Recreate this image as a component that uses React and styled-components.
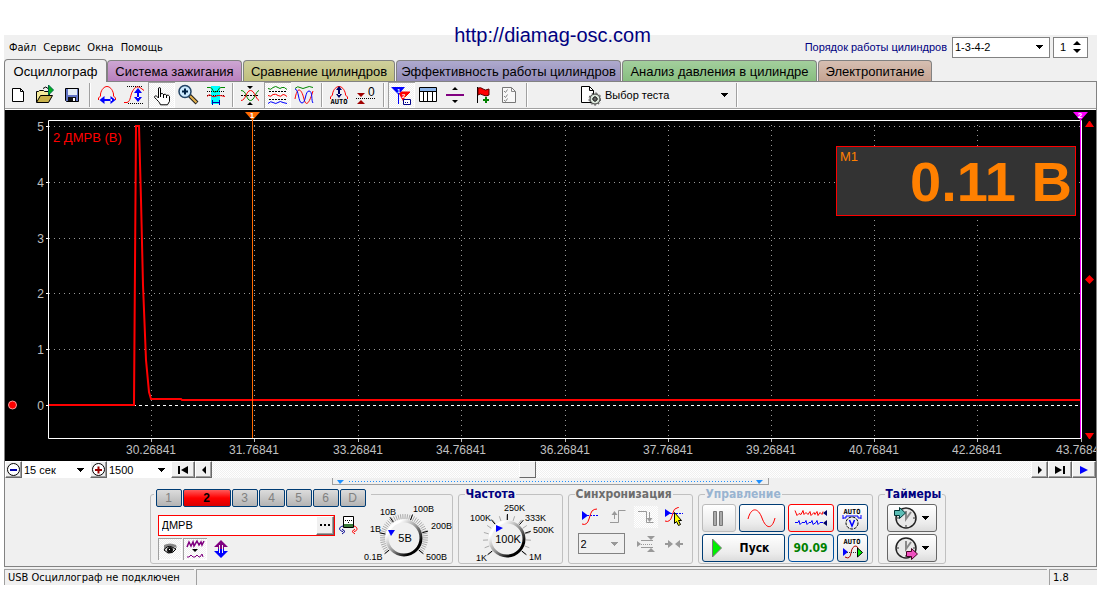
import React, { useState } from 'react'
import styled, { createGlobalStyle, css } from 'styled-components';

const ui = '"Liberation Sans", Arial, sans-serif';
const tahoma = '"DejaVu Sans Condensed", "DejaVu Sans", Tahoma, sans-serif';

/* ---------- small drawings ---------- */

const Pic = ({ w = 24, h = 24, children }) => (
	<svg width={w} height={h} viewBox={`0 0 ${w} ${h}`} fill="none" aria-hidden="true">
		{children}
	</svg>
);

const Down = ({ color = '#000' }) => (
	<svg width="8" height="5" viewBox="0 0 8 5" shapeRendering="crispEdges" aria-hidden="true">
		<path d="M0 0h7v1h-1v1h-1v1h-1v1h-1v-1h-1v-1h-1v-1h-1z" fill={color} />
	</svg>
);

const icons = {
	blank: (
		<Pic>
			<path d="M6.500 5.500h8l3 3v10h-11z" fill="#fff" stroke="#000" />
			<path d="M14.500 5.500v3h3" stroke="#000" />
		</Pic>
	),
	open: (
		<Pic>
			<path d="M3.500 19v-10.500h2l1-1h4l1 1h5v4" fill="#f5eb9c" stroke="#000" />
			<path d="M3.500 19.500l4-7h12l-4 7z" fill="#c9b24a" stroke="#000" />
			<path d="M10 5.500q3-3 5 0" stroke="#000" />
			<path d="M15.500 2v10l5-5z" fill="#00b020" stroke="#064" />
		</Pic>
	),
	save: (
		<Pic>
			<path d="M5.500 5.500h13v13h-12l-1-1z" fill="#6274c4" stroke="#000" />
			<path d="M8 6h9v6h-9z" fill="#e4ecf4" />
			<path d="M8 14h8v4h-8z" fill="#111" />
			<path d="M13 15h2v3h-2z" fill="#fff" />
		</Pic>
	),
	period: (
		<Pic>
			<path d="M3.500 17v-2l2-2v-2c1-5 4-7.500 6.500-7.500s5.500 2.500 6.500 7.500v2l2 2v2" stroke="#f00" />
			<path d="M8 16h9v2h-9z M4.500 17l5-4v8z M20.500 17l-5-4v8z" fill="#00f" />
		</Pic>
	),
	amplitude: (
		<Pic>
			<path d="M5 3.500h16M6 20.500h16" stroke="#000" strokeDasharray="1 1" />
			<path d="M2 19.500h3c4-1 3-8 6-12 2-4 5-4 7-3l4 3" stroke="#f00" />
			<path d="M15 9h2v6h-2z M16 5l4 5h-8z M16 19l4-5h-8z" fill="#00f" />
		</Pic>
	),
	hand: (
		<Pic>
			<path d="M9.500 15v-9q0-1.500 1-1.500t1 1.500v5q2-1.500 3 .5 2-1 3 .8 2-.8 3 1v5l-2 3.500h-7c-1-3-3-4-6-7.500 0-2 2-2 4 .7z" fill="#fff" stroke="#000" />
			<path d="M11.500 10v4M14.500 11v4M17.500 12v3" stroke="#000" />
		</Pic>
	),
	zoom: (
		<Pic>
			<path d="M13 12l8 8" stroke="#222" strokeWidth="4" />
			<path d="M14 13l6.500 6.500" stroke="#e4b04a" strokeWidth="2" />
			<circle cx="9" cy="8.500" r="6" fill="#cdeaff" stroke="#246" strokeWidth="1.500" />
			<path d="M9 5.500v6M6 8.500h6" stroke="#024" strokeWidth="2" />
		</Pic>
	),
	region: (
		<Pic>
			<path d="M8 3h9v18h-9z" fill="#0ff" />
			<path d="M4 4.500h3q2 0 3 3t5 0q1-3 3-3h4" stroke="#080" />
			<path d="M4 8.500h18M4 12.500h18" stroke="#000" strokeDasharray="1 1" />
			<path d="M4 13.500q2-3 4-1t4 1 4-1 6 1" stroke="#f00" />
			<path d="M9 19.500h8M9.500 17v5M16.500 17v5" stroke="#00a" />
		</Pic>
	),
	center: (
		<Pic>
			<path d="M3 12.500h18" stroke="#000" strokeDasharray="2 1" />
			<path d="M3 7.500c6 0 5 10 9.500 10 4 0 5-9 8.500-10" stroke="#080" />
			<path d="M3 17.500c5 0 5-10 9.500-10 4 0 5 8 8.500 10" stroke="#f00" />
			<path d="M9 3h6l-3 3zM9 22h6l-3-3z" fill="#000" />
		</Pic>
	),
	split: (
		<Pic>
			<path d="M3 5.500q3 2 5-1 3-2 5 0 2 2 4 0 2-1 5 2" stroke="#080" />
			<path d="M4 8.500h18M4 16.500h18" stroke="#000" strokeDasharray="2 1" />
			<path d="M3 12.500q3 2 5-1 3-1 5 1 3 2 5-1 2 0 4 2" stroke="#f00" />
			<path d="M3 20.500q3-3 5-1 3 2 5 0t5 0l4 1" stroke="#00f" />
		</Pic>
	),
	overlay: (
		<Pic>
			<path d="M3 5.500q3-3 5-1 3 2 6 0t7 0" stroke="#080" />
			<path d="M3 16c2-12 6-12 9 0 2 8 5 5 9-8" stroke="#f00" />
			<path d="M3 6c4 0 3 14 7 14s3-12 7-12 2 10 4 12" stroke="#00f" />
		</Pic>
	),
	auto: (
		<Pic>
			<path d="M3.500 16v-2l2-2v-1c1-5 4-7.500 6.500-7.500s5.500 2.500 6.500 7.500v1l2 2v2" stroke="#f00" />
			<path d="M11 6h2v6h-2zM12 3l3 4h-6zM12 15l3-4h-6z" fill="#006" />
			<AutoText x="12" y="21" />
		</Pic>
	),
	zero: (
		<Pic>
			<path d="M3 10h8l-4 4zM3 21h8l-4-4z" fill="#a00000" />
			<path d="M2 15.500h20" stroke="#000" strokeDasharray="1 1" />
			<text x="14" y="13" fontFamily={ui} fontSize="12" fill="#000">0</text>
		</Pic>
	),
	markers: (
		<Pic>
			<path d="M9 9h12l-6 6v5" fill="#f00" stroke="#f00" />
			<path d="M2 4h14l-6 7v10h-1v-10z" fill="#00f" />
			<text x="8" y="10" fontFamily={ui} fontSize="6" fontWeight="700" fill="#fff">1</text>
			<text x="13" y="15" fontFamily={ui} fontSize="6" fontWeight="700" fill="#fff">2</text>
			<path d="M14.500 16.500h7v5h-7z" fill="#fff" stroke="#008" />
			<path d="M16 19.500h4" stroke="#008" strokeDasharray="1 1" />
		</Pic>
	),
	table: (
		<Pic>
			<path d="M3.500 4.500h17v14h-17z" fill="#fff" stroke="#000" />
			<path d="M4 5h16v3h-16z" fill="#8bb4ea" />
			<path d="M4 8.500h16M7.500 8v10M11.500 8v10M16.500 8v10" stroke="#000" />
		</Pic>
	),
	levels: (
		<Pic>
			<path d="M3 11h18v2h-18z" fill="#800080" />
			<path d="M12 4l3 3h-6zM12 20l3-3h-6z" fill="#000" />
		</Pic>
	),
	flag: (
		<Pic>
			<path d="M7.500 4v16" stroke="#000" />
			<path d="M8 5q3-1 5 1t6 0v6q-3 2-6 0t-5 0z" fill="#f00" stroke="#500" />
			<path d="M13 17h6M16 14v6" stroke="#008000" strokeWidth="2" />
		</Pic>
	),
	report: (
		<Pic>
			<path d="M5.500 4.500h9l4 4v11h-13z" fill="#f8f8f8" stroke="#777" />
			<path d="M14.500 4.500v4h4M7 8l1.500 1.500 2-3M7 13l1.500 1.500 2-3M7 17l1.500 1.500 2-3" stroke="#888" />
		</Pic>
	),
	test: (
		<Pic>
			<path d="M4.500 3.500h8l4 4v12h-12z" fill="#fff" stroke="#000" />
			<path d="M12.500 3.500v4h4" stroke="#000" />
			<circle cx="18" cy="16" r="5" fill="#dce8dc" stroke="#333" />
			<circle cx="18" cy="16" r="6" stroke="#333" strokeDasharray="2 2" />
			<circle cx="18" cy="16" r="2" fill="#fff" stroke="#000" />
			<path d="M18 13v6M15 16h6" stroke="#333" />
		</Pic>
	),
	eye: (
		<Pic w={20} h={20}>
			<path d="M4 6q6-3 12 0l1 3q-6-3-13 1z" fill="#888" />
			<path d="M4 11q3-5 8-3l4 2q-3 5-8 4z" fill="#d5d5d5" stroke="#000" />
			<circle cx="10" cy="11" r="3" fill="#111" />
			<path d="M9 10h1v1h-1z" fill="#fff" />
		</Pic>
	),
	filter: (
		<Pic w={20} h={20}>
			<path d="M2 8l2-5 2 4 2-4 1 4 3-5 2 4 2-3 1 3 2-4" stroke="#800080" strokeWidth="1.500" />
			<path d="M7 10h6l-3 3z" fill="#000" />
			<path d="M2 18h2l2-2 2 2h2l2-2 2 2h1l2-3 1 3" stroke="#800080" />
		</Pic>
	),
	invert: (
		<Pic w={20} h={20}>
			<path d="M11 1l7 7h-4v2h-6v-2h-4z" fill="#800080" />
			<path d="M11 19l7-7h-4v-2h-6v2h-4z" fill="#00f" />
			<path d="M9.500 6v8M12.500 6v8" stroke="#f0f0f0" />
		</Pic>
	),
	meter: (
		<Pic w={20} h={20}>
			<path d="M5.500 1.500h10v11h-10z" fill="#fff" stroke="#000" />
			<path d="M6 9h9v3h-9z" fill="#397a39" />
			<path d="M7 5.500h7M10 7.500h2" stroke="#000" strokeDasharray="1 1" />
			<path d="M5 11c-5 1-4 5 0 5.500M4 14l3 2.500-3 2.500" stroke="#000090" />
			<path d="M16 11c4 1 4 5 0 5.500M17 14l-3 2.500 3 2.500" stroke="#f00" />
		</Pic>
	),
	syncOn: (
		<Pic w={20} h={20}>
			<path d="M2 4v9l6-4.500z" fill="#00f" />
			<path d="M7 8.500h11" stroke="#00f" strokeDasharray="2 1" />
			<path d="M2 17q5 2 7-5t3-8q2-2 5-2" stroke="#f00" />
		</Pic>
	),
	syncUp: (
		<Pic w={20} h={20}>
			<path d="M2 15.500h8.500v-12h7M6.500 12v-6" stroke="#999" />
			<path d="M6.500 4l3 4h-6z" fill="#999" />
		</Pic>
	),
	syncDown: (
		<Pic w={20} h={20}>
			<path d="M2 4.500h8.500v11h7M13.500 5v8" stroke="#999" />
			<path d="M13.500 15l3-4h-6z" fill="#999" />
		</Pic>
	),
	syncPick: (
		<Pic w={20} h={20}>
			<path d="M1 2v8l6-4z" fill="#00f" />
			<path d="M6 6.500h13" stroke="#00f" strokeDasharray="2 1" />
			<path d="M1 14q5 2 7-5t3-7l4-2" stroke="#f00" />
			<path d="M10.500 5.500v11l2-2 2 4 2-1-2-4h3z" fill="#ff0" stroke="#000" />
		</Pic>
	),
	spread: (
		<Pic w={20} h={20}>
			<path d="M1 7v6l4-3zM11 2h8l-4 4zM11 18h8l-4-4z" fill="#999" />
			<path d="M5 6.500h12M5 13.500h12" stroke="#999" />
			<path d="M5 10.500h12" stroke="#999" strokeDasharray="1 1" />
		</Pic>
	),
	squeeze: (
		<Pic w={20} h={20}>
			<path d="M1 9h3v-3l5 4-5 4v-3h-3zM19 9h-3v-3l-5 4 5 4v-3h3z" fill="#999" />
		</Pic>
	),
	pause: (
		<Pic w={24} h={22}>
			<path d="M6.500 4.500h3v14h-3zM12.500 4.500h3v14h-3z" fill="#aaa" stroke="#777" />
		</Pic>
	),
	sine: (
		<Pic w={32} h={22}>
			<path d="M2 12c3-12 10-12 14-1s10 12 13 0" stroke="#f00" />
		</Pic>
	),
	dual: (
		<Pic w={36} h={22}>
			<path d="M2 3.500l2 5 2-2 2 1 2-4 1 4 2-2 2 2 2-3 1 4 3-3 1 2 2-3 1 4 2-3 2 2 1-3" stroke="#f00" />
			<path d="M2 15.500h3l1-2 1 4 2-2h3l1-2 1 4 2-2h2l1-2 1 4 3-2 1-2 1 4 2-2h3" stroke="#00f" />
			<path d="M34 3v6l-4-3zM34 13v6l-4-3z" fill="#006" />
		</Pic>
	),
	autoVolt: (
		<Pic w={26} h={24}>
			<AutoText x="13" y="8" />
			<path d="M4 12h3v-2h12v2h3M4 9v4M22 9v4" stroke="#00f" />
			<circle cx="13" cy="17" r="6" stroke="#000" strokeDasharray="3 1" fill="#eee" />
			<path d="M10.500 14l2.500 6 2.500-6" stroke="#00f" strokeWidth="1.500" />
		</Pic>
	),
	autoSync: (
		<Pic w={26} h={24}>
			<AutoText x="13" y="8" />
			<path d="M4 12v8l5-4z" fill="#00f" />
			<path d="M6 21q5 3 6-4t5-7q2 0 2 4" stroke="#a00" />
			<path d="M8 16.500h10" stroke="#333" strokeDasharray="1 1" />
			<path d="M18.500 12v9l5-4.500z" fill="#0e0" stroke="#000" />
		</Pic>
	),
	play: (
		<Pic w={12} h={20}>
			<path d="M1.500 1v18l9-9z" fill="#00f000" stroke="#777" />
		</Pic>
	),
};

function AutoText({ x, y }) {
	return (
		<text x={x} y={y} textAnchor="middle" fontFamily={'"DejaVu Sans Mono", monospace'} fontSize="7" fontWeight="700" fill="#000">
			AUTO
		</text>
	);
}

const Clock = ({ out }) => (
	<Pic w={26} h={26}>
		<circle cx="13" cy="13" r="10" fill="#e8e8e8" stroke="#222" strokeWidth="1.500" />
		<path d="M13 6v8l5-7" stroke="#888" strokeWidth="2" />
		<path d="M13 20v2M4 13h2M20 13h2" stroke="#333" />
		{out ? (
			<path d="M13.500 16.500h5v-3l6 5.500-6 5.500v-3h-5z" fill="#f050c0" stroke="#402" />
		) : (
			<path d="M1.500 5.500h5v-3l6 5.500-6 5.500v-3h-5z" fill="#5abdb5" stroke="#033" />
		)}
	</Pic>
);

/* ---------- chart ---------- */

const xTicks = [146, 249, 353, 456, 560, 663, 766, 869, 972, 1076];
const yTicks = [16, 72, 128, 183, 239, 295];

const Chart = () => (
	<Plot viewBox="0 0 1091 351" role="img" aria-label="2 ДМРВ (В)">
		<rect width="1091" height="351" fill="#000" />
		{yTicks.map((y, i) => (
			<g key={y}>
				<path
					d={`M44 ${y}.500H1075`}
					stroke={i === 5 ? '#fff' : '#999'}
					strokeDasharray={i === 5 ? '3 3' : '1 4'}
				/>
				<path d={`M41 ${y}.500h3`} stroke="#fff" />
				<text x="39" y={y + 5} textAnchor="end">{5 - i}</text>
			</g>
		))}
		{xTicks.map((x, i) => (
			<g key={x}>
				<path d={`M${x}.500 15V328`} stroke="#999" strokeDasharray="1 4" />
				<path d={`M${x}.500 329v3`} stroke="#bbb" />
				<text x={x} y="344" textAnchor="middle">{(30.26841 + i * 1.5).toFixed(5)}</text>
			</g>
		))}
		<path d="M43.500 328.500V10.500H1076.500V328.500z" fill="none" stroke="#fff" />
		<path
			d="M44 295H129L131 16H134L136 90L138 175L141 250L144 282L146 289H176L177 290H1075"
			fill="none"
			stroke="#f00"
			strokeWidth="2"
		/>
		<ChannelName x="48" y="32">2 ДМРВ (В)</ChannelName>
		<path d="M247.500 8V328" stroke="#ff6a00" />
		<path d="M240 2h15l-7 8h-1z" fill="#ff6a00" />
		<Flag x="247" y="8">1</Flag>
		<path d="M1075.500 8V328" stroke="#f0f" />
		<path d="M1068 2h15l-7 8h-1z" fill="#f0f" />
		<Flag x="1075" y="8">2</Flag>
		<path d="M1080 17h9l-4-6h-1zM1080 323h9l-4 6h-1zM1080 169.500l4.500-4.500 4.500 4.500-4.500 4.500z" fill="#f00" />
		<circle cx="7.500" cy="295" r="4" fill="#f00" stroke="#f99" />
	</Plot>
);

const Knob = ({ w, value, fine, pointer, marks, label }) => {
	const cx = 42;
	const cy = 38;
	const ticks = [];
	const count = fine ? 46 : 15;
	for (let i = 0; i < count; i++) {
		const a = ((140 + (i * 260) / (count - 1)) * Math.PI) / 180;
		ticks.push(`M${cx + 19 * Math.cos(a)} ${cy + 19 * Math.sin(a)}L${cx + 24 * Math.cos(a)} ${cy + 24 * Math.sin(a)}`);
	}
	return (
		<KnobSvg width={w} height="64" viewBox={`0 0 ${w} 64`} role="img" aria-label={label}>
			<defs>
				<linearGradient id={`ring${w}`} x1="0" y1="0" x2="1" y2="1">
					<stop offset="0.2" stopColor="#fff" />
					<stop offset="0.5" stopColor="#999" />
					<stop offset="0.8" stopColor="#000" />
				</linearGradient>
			</defs>
			<path d={ticks.join('')} stroke="#aaa" />
			{marks.map(([text, x, y, deg]) => {
				const a = (deg * Math.PI) / 180;
				return (
					<g key={text}>
						<path
							d={`M${cx + 19 * Math.cos(a)} ${cy + 19 * Math.sin(a)}L${cx + 25 * Math.cos(a)} ${cy + 25 * Math.sin(a)}`}
							stroke="#000"
						/>
						<text x={x} y={y} fontSize="9">{text}</text>
					</g>
				);
			})}
			<circle cx={cx} cy={cy} r="17" fill="#f0f0f0" stroke={`url(#ring${w})`} strokeWidth="3" />
			<path d={pointer} fill="#00f" />
			<text x={cx + 1} y={cy + 4} fontSize="11" textAnchor="middle">{value}</text>
		</KnobSvg>
	);
};

/* ---------- data ---------- */

const tabs = [
	{ title: 'Осциллограф', w: 103 },
	{ title: 'Система зажигания', w: 135, from: '#cda6d3', to: '#b980bd' },
	{ title: 'Сравнение цилиндров', w: 152, from: '#d0d09c', to: '#bfbf7c' },
	{ title: 'Эффективность работы цилиндров', w: 225, from: '#aeaace', to: '#938cb8' },
	{ title: 'Анализ давления в цилиндре', w: 195, from: '#a3cf9d', to: '#88be80' },
	{ title: 'Электропитание', w: 114, from: '#d6bfb2', to: '#c5a392' },
];

const tools = [
	[['blank', 'Новый'], ['open', 'Открыть'], ['save', 'Сохранить']],
	[['period', 'Период'], ['amplitude', 'Амплитуда'], ['hand', 'Рука', true], ['zoom', 'Масштаб'], ['region', 'Область']],
	[['center', 'Центр'], ['split', 'Разделить', true], ['overlay', 'Наложить']],
	[['auto', 'Авто'], ['zero', 'Ноль']],
	[['markers', 'Маркеры', true], ['table', 'Таблица'], ['levels', 'Уровни'], ['flag', 'Метка'], ['report', 'Отчет']],
];

const channels = ['1', '2', '3', '4', '5', '6', 'D'];

const voltMarks = [
	['0.1В', 2, 60, 141],
	['1В', 8, 32, 192],
	['10В', 18, 15, 236],
	['100В', 51, 12, 290],
	['200В', 69, 29, 344],
	['500В', 64, 60, 39],
];

const freqMarks = [
	['1K', 11, 60, 141],
	['100K', 5, 20, 231],
	['250K', 39, 10, 271],
	['333K', 60, 20, 311],
	['500K', 68, 32, 342],
	['1M', 64, 59, 39],
];

const Combo = ({ children, muted, ...rest }) => (
	<ComboWrap {...rest}>
		{children}
		<ComboArrow><Down color={muted ? '#999' : '#000'} /></ComboArrow>
	</ComboWrap>
);

const App = () => {
	const [active, setActive] = useState(0);
	const [channel, setChannel] = useState('2');
	const [name, setName] = useState('ДМРВ');

	return (
		<Page>
			<GlobalStyle />
			<SiteLink href="http://diamag-osc.com">http://diamag-osc.com</SiteLink>
			<Window>
				<MenuBar>
					<Menu>
						{['Файл', 'Сервис', 'Окна', 'Помощь'].map((m) => (
							<MenuItem key={m}>{m}</MenuItem>
						))}
					</Menu>
					<OrderLabel htmlFor="order">Порядок работы цилиндров</OrderLabel>
					<Combo $width={98} $framed>
						<Select id="order" defaultValue="1-3-4-2">
							<option>1-3-4-2</option>
							<option>1-2-4-3</option>
						</Select>
					</Combo>
					<Spinner>
						<SpinInput aria-label="Цилиндр" defaultValue="1" />
						<Pic w={9} h={14}>
							<path d="M0 5h8l-4-4zM0 9h8l-4 4z" fill="#000" />
						</Pic>
					</Spinner>
				</MenuBar>

				<TabRow role="tablist">
					{tabs.map((t, i) => (
						<Tab
							key={t.title}
							role="tab"
							aria-selected={i === active}
							$active={i === active}
							$width={t.w}
							$from={t.from || '#f0f0f0'}
							$to={t.to || '#f0f0f0'}
							onClick={() => setActive(i)}
						>
							{t.title}
						</Tab>
					))}
				</TabRow>

				<Frame>
					<Toolbar>
						{tools.map((group, i) => (
							<React.Fragment key={i}>
								{group.map(([icon, label, pressed]) => (
									<ToolButton key={icon} aria-label={label} $pressed={pressed}>
										{icons[icon]}
									</ToolButton>
								))}
								<Separator />
							</React.Fragment>
						))}
						<TestButton>
							{icons.test}
							<TestLabel>Выбор теста</TestLabel>
							<Down />
						</TestButton>
						<Separator />
					</Toolbar>

					<ChartArea>
						<Chart />
						<Measure>
							<MeasureName>M1</MeasureName>
							<MeasureValue>0.11 В</MeasureValue>
						</Measure>
					</ChartArea>

					<ScrollRow>
						<SmallButton aria-label="Уменьшить" $width={17}>
							<Pic w={15} h={15}>
								<circle cx="7.500" cy="7.500" r="6" fill="#fff" stroke="#000" />
								<path d="M4 7h7v2h-7z" fill="#00a" />
							</Pic>
						</SmallButton>
						<Combo $width={68}>
							<Select aria-label="Время" defaultValue="15 сек">
								<option>15 сек</option>
							</Select>
						</Combo>
						<SmallButton aria-label="Увеличить" $width={17}>
							<Pic w={15} h={15}>
								<circle cx="7.500" cy="7.500" r="6" fill="#fff" stroke="#000" />
								<path d="M4 7h7v2h-7zM6.500 4.500h2v7h-2z" fill="#900" />
							</Pic>
						</SmallButton>
						<Combo $width={64}>
							<Select aria-label="Точки" defaultValue="1500">
								<option>1500</option>
							</Select>
						</Combo>
						<SmallButton aria-label="В начало" $width={24}>
							<Pic w={12} h={8}><path d="M1 0h2v8h-2zM11 0v8l-7-4z" fill="#000" /></Pic>
						</SmallButton>
						<SmallButton aria-label="Назад" $width={17}>
							<Pic w={6} h={8}><path d="M5 0v8l-4-4z" fill="#000" /></Pic>
						</SmallButton>
						<Track>
							<Thumb />
						</Track>
						<SmallButton aria-label="Вперед" $width={17}>
							<Pic w={6} h={8}><path d="M1 0v8l4-4z" fill="#000" /></Pic>
						</SmallButton>
						<SmallButton aria-label="В конец" $width={24}>
							<Pic w={12} h={8}><path d="M9 0h2v8h-2zM1 0v8l7-4z" fill="#000" /></Pic>
						</SmallButton>
						<SmallButton aria-label="Воспроизвести" $width={24}>
							<Pic w={10} h={8}><path d="M1 0v8l8-4z" fill="#00f" /></Pic>
						</SmallButton>
					</ScrollRow>

					<Splitter>
						<Pic w={8} h={5}><path d="M0 1h7l-4 4z" fill="#1e90ff" /></Pic>
						<Dots />
						<Pic w={8} h={5}><path d="M0 1h7l-4 4z" fill="#1e90ff" /></Pic>
					</Splitter>

					<Controls>
						<ChannelGroup aria-label="Канал">
							<ChannelRow>
								{channels.map((c) => (
									<ChannelButton key={c} $on={c === channel} onClick={() => setChannel(c)}>
										{c}
									</ChannelButton>
								))}
							</ChannelRow>
							<ChannelBody>
								<ChannelSettings>
									<IconRow>
										<NameBox>
											<NameInput
												aria-label="Название канала"
												value={name}
												onChange={(e) => setName(e.target.value)}
											/>
											<MoreButton aria-label="Выбрать">
												<Pic w={10} h={4}>
													<path d="M0 1h2v2h-2zM4 1h2v2h-2zM8 1h2v2h-2z" fill="#000" />
												</Pic>
											</MoreButton>
										</NameBox>
										<IconButton aria-label="Прибор">{icons.meter}</IconButton>
									</IconRow>
									<IconRow>
										<IconButton aria-label="Показать" $pressed>{icons.eye}</IconButton>
										<IconButton aria-label="Фильтр" $pressed>{icons.filter}</IconButton>
										<IconButton aria-label="Инверсия">{icons.invert}</IconButton>
									</IconRow>
								</ChannelSettings>
								<Knob w={87} label="Диапазон" value="5В" fine marks={voltMarks} pointer="M26 30h7l-4 6z" />
							</ChannelBody>
						</ChannelGroup>

						<Group $width={105}>
							<Legend $color="#000080">Частота</Legend>
							<FrequencyBody>
								<Knob w={94} label="Частота" value="100K" marks={freqMarks} pointer="M31 24l7 3-7 4z" />
							</FrequencyBody>
						</Group>

						<Group $width={125}>
							<Legend $color="#6d6d6d">Синхронизация</Legend>
							<SyncGrid>
								<IconButton aria-label="Синхронизация">{icons.syncOn}</IconButton>
								<IconButton aria-label="По фронту">{icons.syncUp}</IconButton>
								<IconButton aria-label="По спаду" $hatched>{icons.syncDown}</IconButton>
								<IconButton aria-label="Указать уровень">{icons.syncPick}</IconButton>
							</SyncGrid>
							<SyncGrid>
								<SyncSelect>
									<Combo $width={47} $framed $grey muted>
										<Select aria-label="Канал синхронизации" defaultValue="2">
											<option>2</option>
										</Select>
									</Combo>
								</SyncSelect>
								<IconButton aria-label="Раздвинуть">{icons.spread}</IconButton>
								<IconButton aria-label="Сдвинуть">{icons.squeeze}</IconButton>
							</SyncGrid>
						</Group>

						<Group $width={175}>
							<Legend $color="#99b4d1">Управление</Legend>
							<RunGrid>
								<PushButton aria-label="Пауза" $edge="#bbb">{icons.pause}</PushButton>
								<PushButton aria-label="Синус">{icons.sine}</PushButton>
								<PushButton aria-label="Два сигнала" $edge="#f00">{icons.dual}</PushButton>
								<PushButton aria-label="Авто диапазон">{icons.autoVolt}</PushButton>
								<StartButton>
									{icons.play}
									<StartLabel>Пуск</StartLabel>
								</StartButton>
								<Rate>90.09</Rate>
								<PushButton aria-label="Авто синхронизация">{icons.autoSync}</PushButton>
							</RunGrid>
						</Group>

						<Group $width={68}>
							<Legend $color="#000080">Таймеры</Legend>
							<TimerColumn>
								<PushButton aria-label="Таймер пуска" $edge="#666"><Clock /><Down /></PushButton>
								<PushButton aria-label="Таймер остановки" $edge="#666"><Clock out /><Down /></PushButton>
							</TimerColumn>
						</Group>
					</Controls>
				</Frame>

				<StatusBar>
					<StatusCell $width={190}>USB Осциллограф не подключен</StatusCell>
					<StatusCell $grow />
					<StatusCell $width={48}>1.8</StatusCell>
				</StatusBar>
			</Window>
		</Page>
	);
}

export default App


const GlobalStyle = createGlobalStyle`
	* {
		box-sizing: border-box;
	}

	body {
		margin: 0;
		background: #fff;
		font-family: ${ui};
		font-size: 11px;
		color: #000;
	}

	button, input, select {
		font: inherit;
		color: inherit;
		margin: 0;
		padding: 0;
		border: 0;
		background: none;
		outline: 0;
		border-radius: 0;
	}

	svg {
		display: block;
		flex: none;
	}
`;

const hatch = css`
	background: repeating-conic-gradient(#f0f0f0 0 25%, #fff 0 50%) 0 0 / 2px 2px;
`;

const sunken = css`
	${hatch}
	box-shadow: inset 1px 1px #a0a0a0, inset -1px -1px #fff;
`;

const Page = styled.div`
	position: relative;
	padding: 35px 12px 5px 4px;
`;

const SiteLink = styled.a`
	position: absolute;
	top: 24px;
	left: 0;
	right: 4px;
	width: max-content;
	margin: 0 auto;
	font-size: 20px;
	line-height: 23px;
	color: #000080;
	text-decoration: none;
`;

const Window = styled.main`
	background: #f0f0f0;
`;

const MenuBar = styled.header`
	display: flex;
	align-items: center;
	height: 24px;
	padding-right: 9px;
`;

const Menu = styled.nav`
	display: flex;
	flex: 1;
	gap: 7px;
	padding: 1px 0 0 5px;
`;

const MenuItem = styled.button`
	font-family: ${tahoma};
`;

const OrderLabel = styled.label`
	margin-right: 5px;
	color: #000080;
`;

const ComboWrap = styled.div`
	position: relative;
	display: flex;
	width: ${(p) => p.$width}px;
	height: ${(p) => (p.$framed ? 21 : 17)}px;
	border: ${(p) => (p.$framed ? '1px solid #828282' : '0')};
	background: ${(p) => (p.$grey ? '#f0f0f0' : '#fff')};
`;

const Select = styled.select`
	appearance: none;
	width: 100%;
	padding: 0 16px 0 2px;
`;

const ComboArrow = styled.span`
	position: absolute;
	right: 5px;
	top: 50%;
	margin-top: -2px;
	pointer-events: none;
`;

const Spinner = styled.div`
	display: flex;
	align-items: center;
	width: 35px;
	height: 21px;
	margin-left: 3px;
	padding: 0 5px 0 6px;
	border: 1px solid #828282;
	background: #fff;
`;

const SpinInput = styled.input`
	flex: 1;
	width: 0;
`;

const TabRow = styled.div`
	display: flex;
	align-items: flex-end;
	height: 23px;
	border-bottom: 1px solid #828282;
`;

const Tab = styled.button`
	width: ${(p) => p.$width}px;
	height: ${(p) => (p.$active ? 23 : 21)}px;
	margin-bottom: ${(p) => (p.$active ? -1 : 0)}px;
	margin-right: ${(p) => (p.$active ? 0 : 1)}px;
	border: 1px solid #828282;
	border-bottom: 0;
	border-radius: 4px 4px 0 0;
	background: linear-gradient(${(p) => p.$from}, ${(p) => p.$to});
	font-size: 13px;
	white-space: nowrap;
`;

const Frame = styled.section`
	border: 1px solid #828282;
	border-top: 0;
`;

const Toolbar = styled.div`
	display: flex;
	height: 28px;
	border-bottom: 1px solid #fff;
	box-shadow: inset 0 -1px #a0a0a0;
	padding-bottom: 1px;
`;

const ToolButton = styled.button`
	display: flex;
	align-items: center;
	justify-content: center;
	width: 27px;
	height: 26px;
	padding-right: 1px;
	${(p) => p.$pressed && sunken}
`;

const Separator = styled.span`
	width: 2px;
	height: 24px;
	margin: 1px 3px;
	border-left: 1px solid #a0a0a0;
	border-right: 1px solid #fff;
`;

const TestButton = styled.button`
	display: flex;
	align-items: center;
	width: 202px;
	padding: 0 4px 0 46px;
	text-align: left;
`;

const TestLabel = styled.span`
	flex: 1;
	padding-left: 4px;
`;

const ChartArea = styled.div`
	position: relative;
`;

const Plot = styled.svg`
	width: 100%;
	height: auto;

	text {
		font-family: ${ui};
		font-size: 12px;
		fill: #c0c0c0;
	}
`;

const ChannelName = styled.text`
	&& {
		font-size: 13px;
		fill: #f00;
	}
`;

const Flag = styled.text`
	text-anchor: middle;

	&& {
		font-size: 8px;
		font-weight: 700;
		fill: #fff;
	}
`;

const Measure = styled.div`
	position: absolute;
	top: 36px;
	right: 20px;
	display: flex;
	justify-content: space-between;
	width: 240px;
	height: 70px;
	padding: 2px 3px;
	border: 1px solid #f00;
	background: #333;
	color: #ff8000;
`;

const MeasureName = styled.span`
	font-size: 13px;
`;

const MeasureValue = styled.span`
	font-size: 56px;
	font-weight: 700;
	line-height: 66px;
`;

const ScrollRow = styled.div`
	display: flex;
	height: 17px;
`;

const SmallButton = styled.button`
	display: flex;
	align-items: center;
	justify-content: center;
	flex: none;
	width: ${(p) => p.$width}px;
	height: 17px;
	border: 1px solid;
	border-color: #fff #696969 #696969 #fff;
	background: #f0f0f0;
	box-shadow: inset -1px -1px #a0a0a0;
`;

const Track = styled.div`
	display: flex;
	justify-content: center;
	flex: 1;
	padding-right: 189px;
	${hatch}
`;

const Thumb = styled.span`
	width: 17px;
	height: 17px;
	border: 1px solid;
	border-color: #fff #696969 #696969 #fff;
	background: #f0f0f0;
`;

const Splitter = styled.div`
	display: flex;
	align-items: center;
	gap: 4px;
	width: 40%;
	height: 7px;
	margin: 0 auto;
	padding: 0 4px;
	border: 1px solid #a0a0a0;
	border-top: 0;
`;

const Dots = styled.span`
	flex: 1;
	height: 1px;
	background: repeating-linear-gradient(90deg, #1e90ff 0 1px, transparent 1px 3px);
`;

const Controls = styled.div`
	display: flex;
	justify-content: center;
	gap: 5px;
	padding: 2px 6px 2px 0;
`;

const Group = styled.fieldset`
	flex: none;
	min-width: 0;
	width: ${(p) => p.$width}px;
	height: 77px;
	margin: 0;
	padding: 0 3px;
	border: 1px solid #c0c0c0;
	border-radius: 3px;
`;

const ChannelGroup = styled(Group)`
	width: 303px;
	height: 70px;
	margin-top: 7px;
`;

const Legend = styled.legend`
	margin-left: 3px;
	padding: 0 1px;
	font-family: ${tahoma};
	font-size: 12px;
	font-weight: 700;
	line-height: 14px;
	color: ${(p) => p.$color};
`;

const ChannelRow = styled.div`
	display: flex;
	gap: 1px;
	width: max-content;
	margin-top: -6px;
	padding: 0 5px 0 2px;
	background: #f0f0f0;
`;

const ChannelButton = styled.button`
	width: ${(p) => (p.$on ? 48 : 26)}px;
	height: 18px;
	border: 1px solid #003c74;
	border-radius: 2px;
	background: ${(p) => (p.$on ? 'linear-gradient(#ff5a5a, #f00 50%, #d80000)' : 'linear-gradient(#dcdcdc, #b4b4b4)')};
	color: ${(p) => (p.$on ? '#000' : '#808080')};
	font-size: 12px;
	font-weight: ${(p) => (p.$on ? 700 : 400)};
	line-height: 16px;
`;

const ChannelBody = styled.div`
	display: flex;
	justify-content: space-between;
`;

const FrequencyBody = styled.div`
	padding-left: 3px;
`;

const ChannelSettings = styled.div`
	display: flex;
	flex-direction: column;
	gap: 2px;
	padding: 7px 0 0 4px;
`;

const IconRow = styled.div`
	display: flex;
	align-items: center;
	gap: 1px;
`;

const NameBox = styled.div`
	display: flex;
	width: 177px;
	height: 21px;
	border: 1px solid #f00;
	background: #fff;
`;

const NameInput = styled.input`
	flex: 1;
	width: 0;
	padding-left: 3px;
`;

const MoreButton = styled(SmallButton).attrs({ $width: 18 })`
	height: 19px;
`;

const IconButton = styled.button`
	display: flex;
	align-items: center;
	justify-content: center;
	width: 24px;
	height: 22px;
	${(p) => p.$hatched && hatch}
	${(p) => p.$pressed && sunken}
`;

const KnobSvg = styled.svg`
	overflow: visible;

	${ChannelBody} & {
		margin-top: -7px;
	}

	text {
		font-family: ${ui};
	}
`;

const SyncGrid = styled.div`
	display: grid;
	grid-template-columns: repeat(4, 24px);
	gap: 4px;
	padding: 5px 0 0 6px;
`;

const SyncSelect = styled.div`
	grid-column: span 2;
`;

const RunGrid = styled.div`
	display: grid;
	grid-template-columns: 34px 46px 46px 31px;
	grid-auto-rows: 28px;
	gap: 2px 3px;
	padding-top: 3px;
`;

const PushButton = styled.button`
	display: flex;
	align-items: center;
	justify-content: center;
	gap: 3px;
	overflow: hidden;
	border: 1px solid ${(p) => p.$edge || '#003c74'};
	border-radius: 3px;
	background: linear-gradient(#fff, #ececec 70%, #dcdcdc);
`;

const StartButton = styled(PushButton)`
	grid-column: span 2;
	justify-content: flex-start;
	padding-left: 8px;
`;

const StartLabel = styled.span`
	flex: 1;
	font-family: ${tahoma};
	font-size: 12px;
	font-weight: 700;
`;

const Rate = styled.output`
	display: flex;
	align-items: center;
	justify-content: center;
	border: 1px solid #0050a0;
	border-radius: 4px;
	color: #008000;
	font-family: ${tahoma};
	font-size: 12px;
	font-weight: 700;
`;

const TimerColumn = styled.div`
	display: grid;
	grid-template-columns: 50px;
	grid-auto-rows: 28px;
	gap: 2px;
	padding: 3px 0 0 5px;
`;

const StatusBar = styled.footer`
	display: flex;
	gap: 2px;
	padding-top: 2px;
	font-family: ${tahoma};
`;

const StatusCell = styled.div`
	flex: ${(p) => (p.$grow ? '1' : 'none')};
	width: ${(p) => (p.$width ? `${p.$width}px` : 'auto')};
	height: 16px;
	padding-left: 3px;
	border-left: 1px solid #a0a0a0;
	border-top: 1px solid #a0a0a0;
	line-height: 16px;
	white-space: nowrap;
`;
